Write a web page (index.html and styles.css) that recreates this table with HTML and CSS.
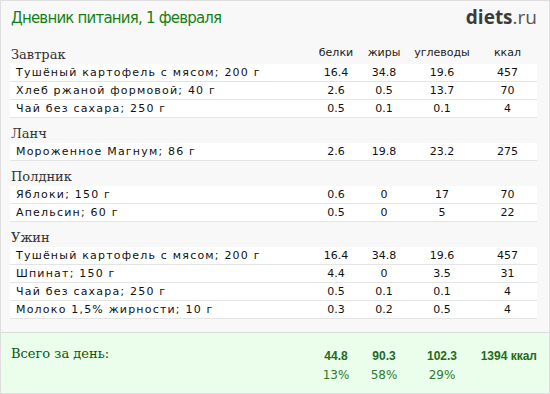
FILE: index.html
```html
<!DOCTYPE html>
<html lang="ru">
<head>
<meta charset="utf-8">
<link rel="stylesheet" href="styles.css">
</head>
<body>
<div class="page">
  <header class="top">
    <h1 class="title">Дневник питания, 1 февраля</h1>
    <div class="logo"><b>diets</b>.ru</div>
  </header>

  <section class="meal">
    <div class="grid meal-head">
      <div class="meal-name">Завтрак</div>
      <div class="colh">белки</div>
      <div class="colh">жиры</div>
      <div class="colh">углеводы</div>
      <div class="colh">ккал</div>
    </div>
    <div class="grid row"><div class="food">Тушёный картофель с мясом; 200 г</div><div>16.4</div><div>34.8</div><div>19.6</div><div>457</div></div>
    <div class="grid row"><div class="food">Хлеб ржаной формовой; 40 г</div><div>2.6</div><div>0.5</div><div>13.7</div><div>70</div></div>
    <div class="grid row"><div class="food">Чай без сахара; 250 г</div><div>0.5</div><div>0.1</div><div>0.1</div><div>4</div></div>
  </section>

  <section class="meal">
    <div class="grid meal-head"><div class="meal-name">Ланч</div></div>
    <div class="grid row"><div class="food">Мороженное Магнум; 86 г</div><div>2.6</div><div>19.8</div><div>23.2</div><div>275</div></div>
  </section>

  <section class="meal">
    <div class="grid meal-head"><div class="meal-name">Полдник</div></div>
    <div class="grid row"><div class="food">Яблоки; 150 г</div><div>0.6</div><div>0</div><div>17</div><div>70</div></div>
    <div class="grid row"><div class="food">Апельсин; 60 г</div><div>0.5</div><div>0</div><div>5</div><div>22</div></div>
  </section>

  <section class="meal">
    <div class="grid meal-head"><div class="meal-name">Ужин</div></div>
    <div class="grid row"><div class="food">Тушёный картофель с мясом; 200 г</div><div>16.4</div><div>34.8</div><div>19.6</div><div>457</div></div>
    <div class="grid row"><div class="food">Шпинат; 150 г</div><div>4.4</div><div>0</div><div>3.5</div><div>31</div></div>
    <div class="grid row"><div class="food">Чай без сахара; 250 г</div><div>0.5</div><div>0.1</div><div>0.1</div><div>4</div></div>
    <div class="grid row"><div class="food">Молоко 1,5% жирности; 10 г</div><div>0.3</div><div>0.2</div><div>0.5</div><div>4</div></div>
  </section>

  <footer class="total">
    <div class="grid total-main">
      <div class="total-label">Всего за день:</div>
      <div>44.8</div><div>90.3</div><div>102.3</div><div class="kcal">1394 ккал</div>
    </div>
    <div class="grid total-pct">
      <div></div><div>13%</div><div>58%</div><div>29%</div><div></div>
    </div>
  </footer>
</div>
</body>
</html>
```

FILE: styles.css
```css
* { box-sizing: border-box; }
html, body { margin: 0; padding: 0; }
body { background: #f8f8f8; }

.page {
  width: 550px;
  height: 394px;
  border: 1px solid #dedede;
  background: #f8f8f8;
  display: flex;
  flex-direction: column;
}

.top {
  height: 38px;
  padding: 6px 12px 0 10px;
  display: flex;
  justify-content: space-between;
  align-items: flex-start;
}
.title {
  margin: 0;
  font: normal 15px/20px "DejaVu Sans", sans-serif;
  color: #168016;
  letter-spacing: -0.8px;
  padding-top: 1px;
}
.logo {
  font: normal 19px/20px "Open Sans", sans-serif;
  color: #555;
}
.logo b { color: #3b3b3b; font-weight: 700; }

.meal { padding: 0 12px 0 9px; }

.grid {
  display: grid;
  grid-template-columns: 300px 52px 44px 72px 59px;
}

.meal-head {
  height: 25px;
  align-items: end;
  padding-bottom: 1px;
}
.meal-name {
  font: normal 13px/17px "DejaVu Serif", serif;
  color: #333;
  padding-left: 1px;
}
.colh {
  font: normal 11px/14px "DejaVu Sans", sans-serif;
  color: #222;
  text-align: center;
  padding-bottom: 3px;
}

.row {
  background: #fff;
  border-bottom: 1px solid #e4e4e4;
  height: 18px;
  font: normal 11px/17px "DejaVu Sans", sans-serif;
  color: #111;
  text-align: center;
}
.row .food { text-align: left; padding-left: 6px; letter-spacing: 1.2px; }

.total {
  margin-top: auto;
  height: 61px;
  border-top: 1px solid #dcdcdc;
  background: #ebfeeb;
  padding: 11px 12px 0 9px;
}
.total-main {
  height: 20px;
  align-items: end;
  font: bold 12px/16px "Liberation Sans", sans-serif;
  color: #226a22;
  text-align: center;
}
.total-label {
  text-align: left;
  padding-left: 1px;
  padding-bottom: 1px;
  font: normal 13px/18px "DejaVu Serif", serif;
  color: #0c560c;
}
.kcal { text-align: right; white-space: nowrap; }
.total-pct {
  margin-top: 3px;
  font: normal 12px/16px "DejaVu Sans", sans-serif;
  color: #2b7d2b;
  text-align: center;
}
```
